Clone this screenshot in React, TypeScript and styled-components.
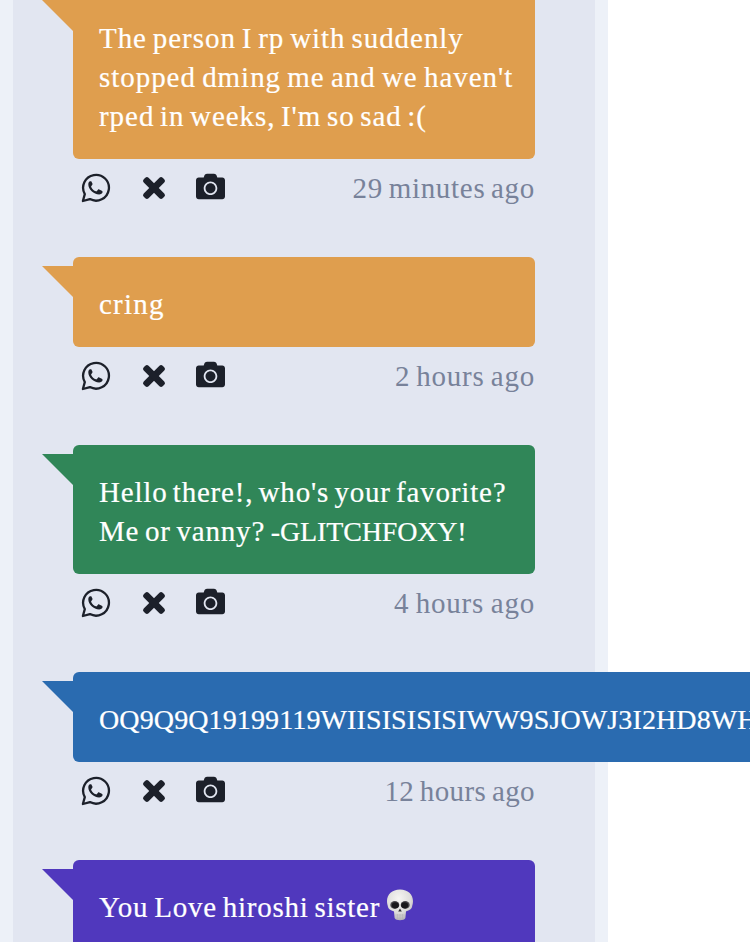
import styled, { createGlobalStyle } from 'styled-components'
import { FaCamera } from 'react-icons/fa'

const GlobalStyle = createGlobalStyle`
  * {
    box-sizing: border-box;
  }
  body {
    margin: 0;
    background: #ffffff;
    font-family: 'Liberation Serif', 'Noto Sans', serif;
  }
`

const Page = styled.main`
  width: 100%;
  height: 942px;
  overflow: hidden;
`

const Frame = styled.div`
  width: 608px;
  height: 942px;
  padding: 0 13px;
  background: #edf1f8;
`

const Feed = styled.section`
  display: flex;
  flex-direction: column;
  height: 942px;
  padding: 0 60px;
  background: #e2e6f1;
`

const Message = styled.article`
  flex-shrink: 0;
  &:first-child {
    margin-top: -9.5px;
  }
`

const Bubble = styled.div<{ $color: string; $long?: boolean }>`
  position: relative;
  width: ${p => p.$long ? 'max-content' : '100%'};
  padding: 28.5px 26px 23px;
  border-radius: 6px;
  background: ${p => p.$color};
  color: #ffffff;
  &::before {
    content: '';
    position: absolute;
    top: 9.5px;
    left: -31px;
    border-top: 31px solid ${p => p.$color};
    border-left: 31px solid transparent;
  }
`

const Line = styled.p`
  display: flex;
  align-items: baseline;
  height: 39px;
  margin: 0;
  font-size: 29px;
  line-height: 39px;
  white-space: pre;
  -webkit-text-stroke: 0.2px currentColor;
`

const Run = styled.span<{ $track: number; $word?: number; $caps?: boolean }>`
  font-size: ${p => p.$caps ? 28 : 29}px;
  letter-spacing: ${p => p.$track}px;
  word-spacing: ${p => p.$word || 0}px;
`

const Footer = styled.footer`
  display: flex;
  align-items: center;
  justify-content: space-between;
  height: 97.5px;
  padding: 0 0 39px 8px;
`

const Actions = styled.div`
  display: flex;
  align-items: center;
  color: #1c202a;
  svg {
    display: block;
  }
`

const Whatsapp = styled.svg`
  width: 30px;
  height: 30px;
`

const Cross = styled.svg`
  width: 24px;
  height: 24px;
  margin: 0 30px 0 31px;
`

const Camera = styled(FaCamera)`
  margin-top: -3px;
`

const Time = styled.time`
  color: #78829a;
  font-size: 29px;
  line-height: 39px;
  white-space: nowrap;
`

const Emoji = styled.svg`
  align-self: center;
  width: 28px;
  height: 34px;
  margin: -5px 0 0 0;
`

type Text = { text: string; track: number; word?: number; caps?: boolean }

const messages: { color: string; lines: Text[][]; time?: Text; skull?: boolean; long?: boolean }[] = [
  {
    color: '#df9e4e',
    lines: [
      [{ text: 'The person I rp with suddenly', track: 0.95, word: -2.3 }],
      [{ text: "stopped dming me and we haven't", track: 0.95, word: -1.9 }],
      [{ text: "rped in weeks, I'm so sad :(", track: 0.95, word: -2.6 }],
    ],
    time: { text: '29 minutes ago', track: 0.7, word: -2.3 },
  },
  {
    color: '#df9e4e',
    lines: [[{ text: 'cring', track: 1.2 }]],
    time: { text: '2 hours ago', track: 0.8, word: -2 },
  },
  {
    color: '#308658',
    lines: [
      [{ text: "Hello there!, who's your favorite?", track: 0.8, word: -2.7 }],
      [
        { text: 'Me or vanny? ', track: 0.8, word: -2.3 },
        { text: '-GLITCHFOXY!', track: -0.15, caps: true },
      ],
    ],
    time: { text: '4 hours ago', track: 0.8, word: -1.5 },
  },
  {
    color: '#2a6bb0',
    lines: [[{ text: 'OQ9Q9Q19199119WIISISISISIWW9SJOWJ3I2HD8WH', track: 0.12, caps: true }]],
    time: { text: '12 hours ago', track: 0.4, word: -2 },
    long: true,
  },
  {
    color: '#5038bd',
    lines: [[{ text: 'You Love hiroshi sister ', track: 0.75, word: -2.1 }]],
    skull: true,
  },
]

function Skull() {
  return (
    <Emoji viewBox="0 0 28 34">
      <defs>
        <radialGradient id="bone" cx="45%" cy="30%" r="70%">
          <stop offset="0" stopColor="#f6f5f3" />
          <stop offset="0.65" stopColor="#dedddb" />
          <stop offset="1" stopColor="#b5b3b6" />
        </radialGradient>
      </defs>
      <path d="M14 1.5C6 1.5 1 6.500 1 13c0 3 .7 4 1 6 .4 2.500 3.500 3.500 6 4.500l.6 6.500c.8 3 10 3 10.800 0l.6-6.500c2.500-1 5.600-2 6-4.500.3-2 1-3 1-6C27 6.500 22 1.500 14 1.500z" fill="url(#bone)" />
      <ellipse cx="8.800" cy="17" rx="4.500" ry="3.900" fill="#4a484c" />
      <ellipse cx="19.200" cy="17" rx="4.500" ry="3.900" fill="#4a484c" />
      <ellipse cx="9.300" cy="17.300" rx="3.500" ry="3" fill="#19181b" />
      <ellipse cx="18.700" cy="17.300" rx="3.500" ry="3" fill="#19181b" />
      <path d="M14 20.500l-1.800 3h3.600z" fill="#302e33" />
      <path d="M9.500 27h9M11.500 26v5M14 26v6M16.500 26v5" fill="none" stroke="#b5b3b5" strokeWidth=".5" />
    </Emoji>
  )
}

export default function App() {
  return (
    <Page>
      <GlobalStyle />
      <Frame>
        <Feed>
          {messages.map((m, i) => (
            <Message key={i}>
              <Bubble $color={m.color} $long={m.long}>
                {m.lines.map((line, j) => (
                  <Line key={j}>
                    {line.map(run => (
                      <Run key={run.text} $track={run.track} $word={run.word} $caps={run.caps}>{run.text}</Run>
                    ))}
                    {m.skull && <Skull />}
                  </Line>
                ))}
              </Bubble>
              {m.time && (
                <Footer>
                  <Actions>
                    <Whatsapp viewBox="0 0 30 30">
                      <path d="M3.800 21.100A12.900 12.900 0 1 1 8.900 26.100L1.900 28z" fill="none" stroke="currentColor" strokeWidth="2.300" strokeLinejoin="round" />
                      <path d="M9.300 8.300c-1.300.2-2 1.600-2 2.900 0 5.200 5.400 10.200 10.800 10.200 1.700 0 3.400-1 3.500-2.500 0-.6-.3-.9-.8-1.200l-2.600-1.300c-.5-.2-.9-.1-1.200.3l-1.100 1.400c-.3.3-.6.4-1 .2-2-.9-3.700-2.300-4.700-4.400-.2-.4-.1-.7.2-1l.9-1.100c.3-.4.3-.8.1-1.200l-1-2.200c-.3-.4-.5-.2-1.100-.1z" fill="currentColor" />
                    </Whatsapp>
                    <Cross viewBox="0 0 24 24">
                      <g fill="currentColor">
                        <rect x="8.600" y="-1.400" width="6.800" height="26.800" rx="2.300" transform="rotate(45 12 12)" />
                        <rect x="8.600" y="-1.400" width="6.800" height="26.800" rx="2.300" transform="rotate(-45 12 12)" />
                      </g>
                    </Cross>
                    <Camera size={29} />
                  </Actions>
                  <Time>
                    <Run $track={m.time.track} $word={m.time.word}>{m.time.text}</Run>
                  </Time>
                </Footer>
              )}
            </Message>
          ))}
        </Feed>
      </Frame>
    </Page>
  )
}
